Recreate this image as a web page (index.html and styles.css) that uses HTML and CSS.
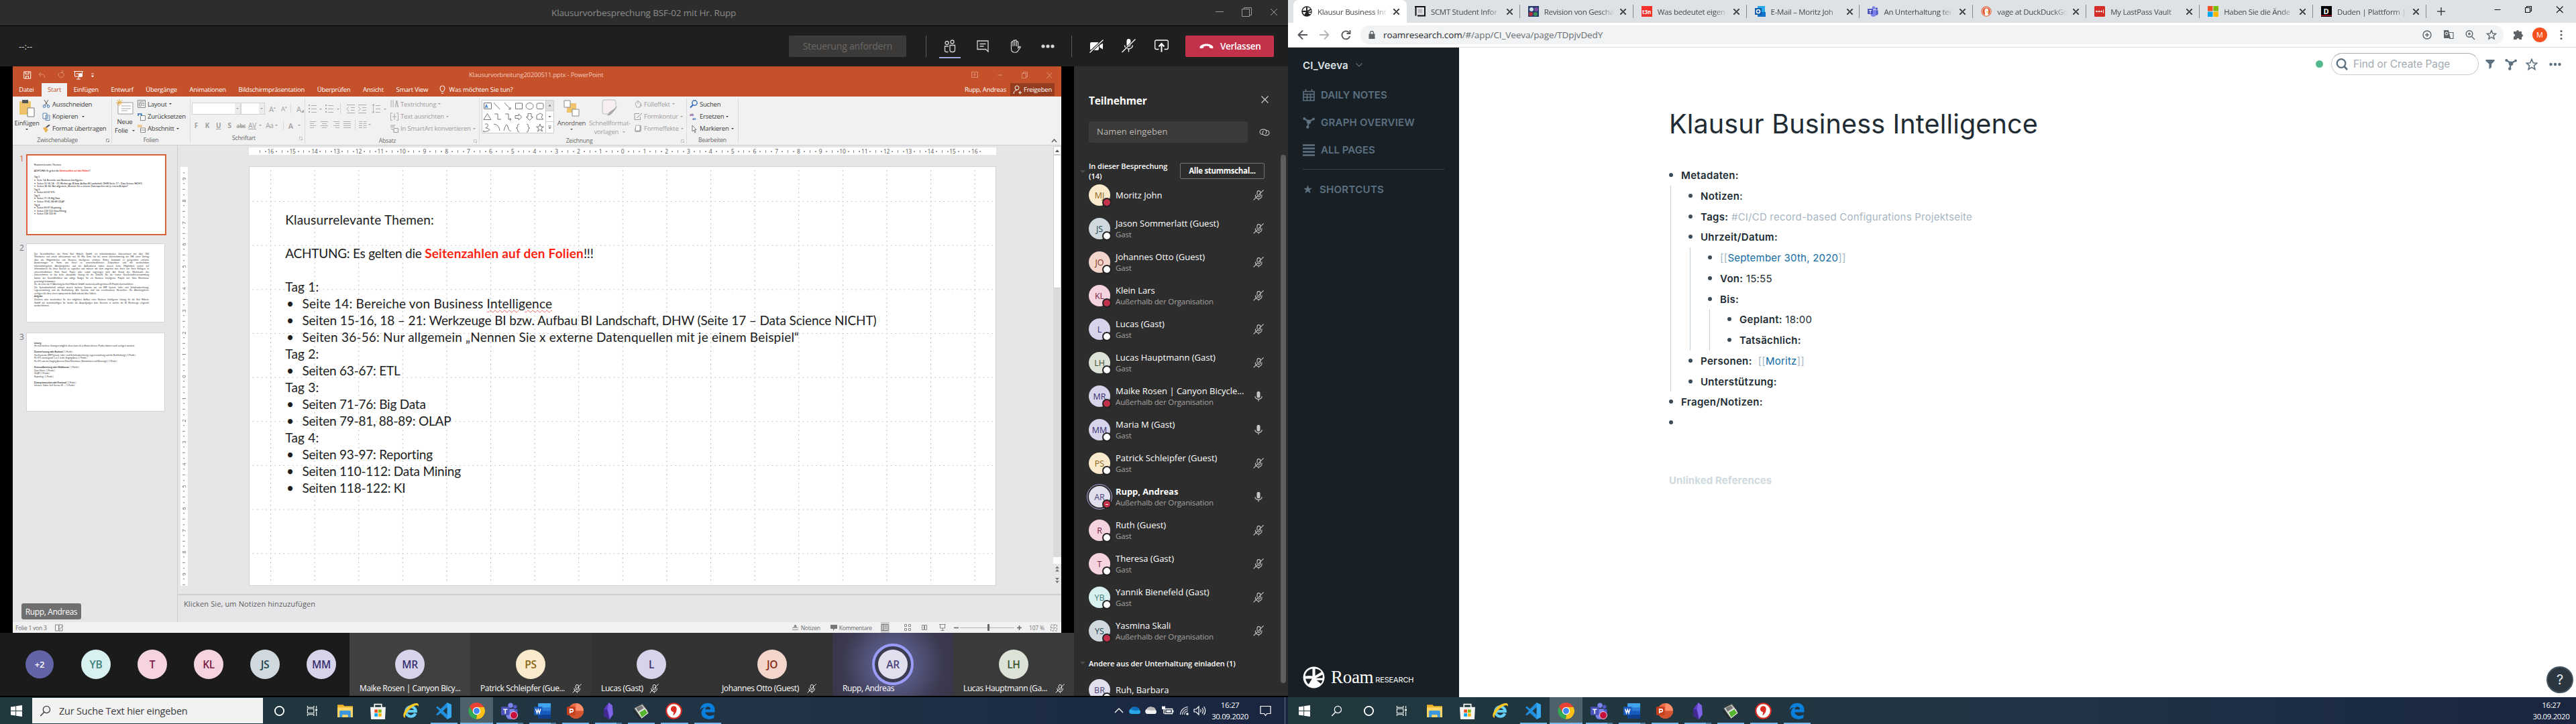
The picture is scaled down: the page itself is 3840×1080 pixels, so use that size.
FILE: index.html
```html
<!DOCTYPE html>
<html lang="de">
<head>
<meta charset="utf-8">
<title>Desktop</title>
<link rel="stylesheet" href="styles.css">
</head>
<body>
<svg class="defs" width="0" height="0" aria-hidden="true">
  <symbol id="mic-off" viewBox="0 0 16 16"><path d="M6 8V4a2.4 2.4 0 0 1 4.8 0v4.5a2.4 2.4 0 0 1-3.6 1.7M3.4 7.5v1.2a4.8 4.8 0 0 0 9.6 0V7.5M8.3 13.4v2.4M.6 15.4 15.6.4" fill="none" stroke="currentColor" stroke-width="1.1"/></symbol>
  <symbol id="mic" viewBox="0 0 16 16"><rect x="5.5" y=".8" width="5" height="9.6" rx="2.5" fill="currentColor"/><path d="M2.9 8.2a5.1 4.4 0 0 0 10.2 0M8 12.7v2.8" fill="none" stroke="currentColor" stroke-width="1.2"/></symbol>
  <symbol id="i-start" viewBox="0 0 18 18"><path d="M0 2.6 7.6 1.5v7H0zM8.6 1.4 18 0v8.5H8.6zM0 9.5h7.6v7L0 15.4zM8.6 9.5H18V18l-9.4-1.4z" fill="#fff"/></symbol>
  <symbol id="i-search" viewBox="0 0 18 18"><circle cx="11" cy="6.8" r="5.4" fill="none" stroke="currentColor" stroke-width="1.3"/><path d="M7.2 10.8 1.4 17" stroke="currentColor" stroke-width="1.5"/></symbol>
  <symbol id="i-cortana" viewBox="0 0 18 18"><circle cx="9" cy="9" r="7" fill="none" stroke="#fff" stroke-width="2"/></symbol>
  <symbol id="i-task" viewBox="0 0 18 18"><path d="M1.5 1v2.5h10V1M1.5 17v-2.5h10V17M1.5 5.5h10v7h-10zM15.5 1v4M15.5 10v7" fill="none" stroke="#fff" stroke-width="1.2"/><path d="M14 6h3v3h-3z" fill="#fff"/></symbol>
  <symbol id="i-explorer" viewBox="0 0 24 24"><path d="M1 3h8l2 2h12v16H1z" fill="#f0b429"/><path d="M1 7h22v14H1z" fill="#ffd667"/><path d="M4 21v-8q0-1.5 1.5-1.5h13Q20 11.5 20 13v8h-4v-3.5H8V21z" fill="#3d97dd"/></symbol>
  <symbol id="i-store" viewBox="0 0 24 24"><path d="M7 7V2.5h10V7" fill="none" stroke="#fff" stroke-width="1.6"/><path d="M1 6.5h22L22 24H2z" fill="#f5f5f5"/><path d="M7 10h4.500v4.500H7z" fill="#f25022"/><path d="M12.500 10H17v4.500h-4.500z" fill="#7fba00"/><path d="M7 15.500h4.500V20H7z" fill="#00a4ef"/><path d="M12.500 15.500H17V20h-4.500z" fill="#ffb900"/></symbol>
  <symbol id="i-ie" viewBox="0 0 24 24"><path d="M18.500 15.500A7 7 0 1 1 19 12.500H6" fill="none" stroke="#63cdf5" stroke-width="4"/><path d="M3.500 21.500C-2 19 6 6 15 2.500c5-2 8-1.500 7.500 2.500-.2-2-3-2.200-7 0C8 9 1.500 19 3.500 21.500z" fill="#f8c927" stroke="#f8c927"/></symbol>
  <symbol id="i-vs" viewBox="0 0 24 24"><path d="M17 0l6 3v18l-6 3-9.500-9L3 18.500 1 17.300 6 12 1 6.700 3 5.500 7.500 9zM17 6.500 11 12l6 5.500z" fill="#1f8fdd" fill-rule="evenodd"/><path d="M17 0l6 3v18l-6 3z" fill="#35a8f0"/></symbol>
  <symbol id="i-chrome" viewBox="0 0 24 24"><path d="M12 12 2 6A11.500 11.500 0 0 1 22 6z" fill="#ea4335"/><path d="M12 12 22.200 6.300A11.500 11.500 0 0 1 12 23.500z" fill="#fbc116"/><path d="M12 12v11.500A11.500 11.500 0 0 1 2 6z" fill="#34a853"/><path d="M12 6.500h10.300A11.500 11.500 0 0 0 2 6l5.200 8.500z" fill="#ea4335"/><path d="M16.800 14.700 11 23.500A11.500 11.500 0 0 0 22.300 6.500H12z" fill="#fbc116"/><circle cx="12" cy="12" r="5.500" fill="#fff"/><circle cx="12" cy="12" r="4.300" fill="#4285f4"/></symbol>
  <symbol id="i-teams" viewBox="0 0 24 24"><circle cx="20" cy="6" r="2.700" fill="#5059c9"/><path d="M16 9.500h7.500v7a4 4 0 0 1-4 4H16z" fill="#5059c9"/><circle cx="13.500" cy="4" r="3.600" fill="#7b83eb"/><path d="M7 9h12v9a6 6 0 0 1-12 0z" fill="#7b83eb"/><rect x="0" y="6" width="12" height="12" rx="1" fill="#4b53bc"/><path d="M3 9h6v1.500H6.800V16H5.200v-5.500H3z" fill="#fff"/></symbol>
  <symbol id="i-word" viewBox="0 0 24 24"><rect x="6" y="1" width="18" height="22" rx="1.500" fill="#2b7cd3"/><path d="M6 1h18v6H6z" fill="#41a5ee"/><path d="M6 17h18v6H6z" fill="#103f91"/><path d="M6 12h18v5H6z" fill="#185abd"/><rect y="6" width="12" height="12" rx="1" fill="#185abd"/><path d="M2.500 9 4.300 15 6 10l1.700 5L9.500 9" fill="none" stroke="#fff" stroke-width="1.500"/></symbol>
  <symbol id="i-ppt" viewBox="0 0 24 24"><circle cx="13" cy="12" r="11" fill="#ed6c47"/><path d="M13 1a11 11 0 0 1 11 11H13z" fill="#ff8f6b"/><path d="M2 12h22a11 11 0 0 1-22 0z" fill="#d35230"/><rect y="6" width="12" height="12" rx="1" fill="#c43e1c"/><path d="M4.500 15.500v-6H7a1.800 1.800 0 0 1 0 3.800H4.500" fill="none" stroke="#fff" stroke-width="1.500"/></symbol>
  <symbol id="i-obs" viewBox="0 0 24 24"><path d="M13 0 18 4l1 13-5 7-8-5 0-10z" fill="#5a3ec8"/><path d="M13 0 11 10l3 14 5-7-1-13z" fill="#7d63e6"/><path d="M6 9l5 1 3 14-8-5z" fill="#41298f"/></symbol>
  <symbol id="i-green" viewBox="0 0 24 24"><path d="M2 8 14 2l8 10-11 9z" fill="#d8dcd8" stroke="#444" stroke-width="1.200"/><path d="M5 8l8-4 3 4-8 5z" fill="#777"/><path d="M9 14l9-5 4 6-9 7z" fill="#55b72f" stroke="#eee"/><path d="M2 12l9 11" stroke="#222" stroke-width="1.800" stroke-dasharray="2 1"/></symbol>
  <symbol id="i-red" viewBox="0 0 24 24"><circle cx="12" cy="12" r="10.800" fill="#fff" stroke="#d92b20" stroke-width="2"/><path d="M12 5a4 4 0 0 1 4 4.500c0 4-2 7-5.500 9.500.9-2.500 1.500-4 1.200-5.500A4.200 4.200 0 1 1 12 5z" fill="#d92b20"/></symbol>
  <symbol id="i-edge" viewBox="0 0 24 24"><path d="M1.500 11C2 4 7 .8 12.500.8 19 .8 22.500 5 22.500 10.500V14H9c.3 3.500 3.500 5 6.500 5 2.500 0 4.500-.7 6-1.700V22c-2 1-4.500 1.700-7.500 1.700C7 23.700 3 19.500 3.500 14c.3-3.500 2.500-6 5-7.300C4.500 7 2.500 9 1.500 11zM9 9.800h7.500C16.500 7.500 15 6 12.800 6 10.700 6 9.300 7.500 9 9.800z" fill="#0a7fdb"/></symbol>
  <symbol id="i-graph" viewBox="0 0 18 18"><path d="M2.500 3 9 7.500 16 3.500M9 7.500 7.500 15" stroke="currentColor" stroke-width="2.200" fill="none"/><circle cx="2.300" cy="3" r="2" fill="currentColor"/><circle cx="16" cy="3.500" r="1.900" fill="currentColor"/><circle cx="9" cy="7.800" r="3.300" fill="currentColor"/><circle cx="7.300" cy="15.600" r="2.200" fill="currentColor"/></symbol>
  <symbol id="i-roam" viewBox="0 0 32 32"><circle cx="16" cy="16" r="15.500" fill="currentColor"/><path d="M14 3.500C8 4.500 4 9 3.500 14q7-1 10.500 0zM18 3.500v10L27 8q-3-4-9-4.500zM4 18q1 5 4.500 8l5-8zM28.500 12 19 17h9.500q.8-2 0-5zM20 20l6 5q2-2 2.500-5z" fill="var(--hole)"/></symbol>
</svg>

<div class="desktop">
<section class="monitor teams">
  <header class="t-title"><span>Klausurvorbesprechung BSF-02 mit Hr. Rupp</span>
    <div class="t-win"><svg width="54" height="16" viewBox="0 0 54 16"><path d="M0 7.500h12M39.500 3.500h11v11h-11zM42.500 3.500v-2h11v11h-2.500" fill="none" stroke="#9a9a9a"/></svg><svg width="12" height="12" viewBox="0 0 12 12"><path d="M1 1l10 10M11 1 1 11" stroke="#9a9a9a"/></svg></div>
  </header>
  <div class="t-bar">
    <span class="timer">--:--</span>
    <span class="request">Steuerung anfordern</span>
    <i class="vbar"></i>
    <div class="t-tools">
      <span class="tool active"><svg width="18" height="20" viewBox="0 0 18 20"><g fill="none" stroke="#d6d6d6" stroke-width="1.300"><circle cx="4.500" cy="5" r="2.500"/><circle cx="12.500" cy="3.500" r="2.500"/><path d="M7 10H1.500v6a2.500 2.500 0 0 0 2.500 2.500h2.500M9 8.500h7.500v7a3 3 0 0 1-3 3h-1.500a3 3 0 0 1-3-3z"/></g></svg></span>
      <span class="tool"><svg width="18" height="18" viewBox="0 0 18 18"><path d="M1 1h16v16l-3.500-3.500H1zM4.500 5.500h9M4.500 9h6" fill="none" stroke="#d6d6d6" stroke-width="1.300"/></svg></span>
      <span class="tool"><svg width="18" height="20" viewBox="0 0 18 20"><path d="M3.500 12V4.500a1.300 1.300 0 0 1 2.600 0V10 2.500a1.300 1.300 0 0 1 2.600 0V9.500 2a1.300 1.300 0 0 1 2.600 0v8 -6a1.200 1.200 0 0 1 2.400 0v8.500l2-2c1-.6 2 .2 1.400 1.200L13 17.500c-2.500 3-9.500 2-9.500-3z" fill="none" stroke="#d6d6d6" stroke-width="1.200"/></svg></span>
      <span class="tool"><svg width="20" height="6" viewBox="0 0 20 6"><g fill="#d6d6d6"><circle cx="3" cy="3" r="2.600"/><circle cx="10" cy="3" r="2.600"/><circle cx="17" cy="3" r="2.600"/></g></svg></span>
    </div>
    <i class="vbar"></i>
    <div class="t-tools media">
      <span class="tool"><svg width="21" height="20" viewBox="0 0 21 20"><path d="M1 6q0-2 2-2h9q2 0 2 2v8q0 2-2 2H3q-2 0-2-2zM15 8.500l5-3v9l-5-3z" fill="#fff"/><path d="M.5 19.500 20.500.5" stroke="#1f1f1f" stroke-width="3.500"/><path d="M.5 19.500 20.500.5" stroke="#fff" stroke-width="1.300"/></svg></span>
      <span class="tool"><svg width="21" height="21" viewBox="0 0 21 21"><rect x="7.500" y="0" width="6" height="12" rx="3" fill="#fff"/><path d="M4.500 9.500a6 5.500 0 0 0 12 0M10.500 15.500v4" fill="none" stroke="#fff" stroke-width="1.300"/><path d="M.5 20 20.500.5" stroke="#1f1f1f" stroke-width="3"/><path d="M.5 20 20.500.5" stroke="#fff" stroke-width="1.300"/></svg></span>
      <span class="tool"><svg width="21" height="19" viewBox="0 0 21 19"><path d="M6.500 14.500H3Q.7 14.500.7 12.500V3Q.7 1 3 1h15q2.300 0 2.300 2v9.500q0 2-2.300 2h-3.500" fill="none" stroke="#fff" stroke-width="1.300"/><path d="M10.500 18.500V7M6.500 10.500l4-4.500 4 4.500" fill="none" stroke="#fff" stroke-width="2"/></svg></span>
    </div>
    <span class="leave"><svg width="21" height="8" viewBox="0 0 21 8"><path d="M.5 6C0 3 5 .5 10.500.5S21 3 20.500 6q-.3 1.500-2 1.200L15.500 6.500q-1-.3-1-1.500V4q-4-1.200-8 0v1q0 1.200-1 1.500l-3 .7Q.8 7.500.5 6z" fill="#fff"/></svg>Verlassen</span>
  </div>
  <div class="t-body">
    <div class="stage">
      <div class="ppt">
        <div class="p-title">
          <svg width="110" height="16" viewBox="0 0 110 16"><g fill="none" stroke="#fff"><path d="M.7 3h10v10h-10zM3 3v3.500h5V3M3.500 13V9.500h4V13"/><path d="M26 4l-3 3 3 3M23.500 7h5q3 0 3 5M58 4a4 4 0 1 1-5 1M58 1v3.500h-3.500" stroke="#e09479"/><path d="M75 2.500h14M76.500 3v7h11V3M82 10v4M79 14h6M79 6h4"/></g><circle cx="85" cy="8" r="3" fill="#fff"/><path d="M101 6h4M101.500 9h3L103 11z" fill="#fff" stroke="#fff" stroke-width=".8"/></svg>
          <span class="p-name">Klausurvorbreitung20200511.pptx - PowerPoint</span>
          <svg class="p-win" width="120" height="12" viewBox="0 0 120 12"><path d="M.5 1.500h9v8h-9zM5 8V4M3 5.500 5 3.500l2 2M39 6h7M75.500 3.500h6v7h-6zM77.500 3.500v-2h6v7h-2M112.500 2l8 9M120.500 2l-8 9" fill="none" stroke="#dd9378"/></svg>
        </div>
        <nav class="p-tabs"><span>Datei</span><span class="on">Start</span><span>Einfügen</span><span>Entwurf</span><span>Übergänge</span><span>Animationen</span><span>Bildschirmpräsentation</span><span>Überprüfen</span><span>Ansicht</span><span>Smart View</span>
          <svg width="9" height="13" viewBox="0 0 9 13"><path d="M3 9.500Q1 7 1 4.500a3.500 3.500 0 0 1 7 0Q8 7 6 9.500zM3 12h3" fill="none" stroke="#fff"/></svg><span class="ask">Was möchten Sie tun?</span>
          <span class="user">Rupp, Andreas</span><span class="share"><svg width="13" height="14" viewBox="0 0 13 14"><circle cx="6" cy="4" r="3" fill="none" stroke="#fff"/><path d="M1 13q0-5 5-5.500M8 11h5M10.500 8.500v5" fill="none" stroke="#fff"/></svg>Freigeben</span></nav>
        <div class="ribbon">
          <div class="grp g1"><div class="gb">
            <div class="big"><svg width="24" height="27" viewBox="0 0 24 27"><path d="M1 3h17v20H1z" fill="#efc36c"/><path d="M5 1h9v5H5z" fill="#555"/><path d="M13 13h10v13H13z" fill="#fff" stroke="#777"/></svg><span>Einfügen</span><i class="dd"></i></div>
            <div class="rows"><span><svg viewBox="0 0 12 12"><path d="M3 0l5 8M9 0 4 8" stroke="#555"/><circle cx="3" cy="9.500" r="1.800" fill="none" stroke="#2b6cb8"/><circle cx="9" cy="9.500" r="1.800" fill="none" stroke="#2b6cb8"/></svg>Ausschneiden</span><span><svg viewBox="0 0 12 12"><path d="M1 1h6v8H1zM5 4h6v7.500H5z" fill="#fff" stroke="#5f83a8"/><path d="M6.500 6.500h3M6.500 9h3" stroke="#5f83a8"/></svg>Kopieren<i class="dd"></i></span><span><svg viewBox="0 0 12 12"><path d="M1 5l4-2 4 5-4 4z" fill="#e8b45a"/><path d="M6 4l5-4" stroke="#555" stroke-width="2"/></svg>Format übertragen</span></div>
          </div><div class="gl">Zwischenablage<i class="la"></i></div></div>
          <div class="grp g2"><div class="gb">
            <div class="big"><svg width="26" height="24" viewBox="0 0 26 24"><path d="M3 5h22v17H3z" fill="#fff" stroke="#999"/><path d="M8 10h14M8 14h14M8 17h9" stroke="#aaa"/><path d="M5 0v10M0 5h10M1.500 1.500l7 7M8.500 1.500l-7 7" stroke="#e9a33b"/></svg><span>Neue<br>Folie <i class="dd"></i></span></div>
            <div class="rows"><span><svg viewBox="0 0 12 12"><path d="M.5.5h11v11H.5zM2.500 3h7M2.500 5v4h3V5zM7 5.500h3M7 8h3" fill="none" stroke="#888"/></svg>Layout<i class="dd"></i></span><span><svg viewBox="0 0 12 12"><path d="M4.500 4.500h7v7h-7z" fill="#fff" stroke="#888"/><path d="M1 5V1M1 2h5v3" fill="none" stroke="#2b6cb8" stroke-width="1.500"/></svg>Zurücksetzen</span><span><svg viewBox="0 0 12 12"><path d="M0 1h7M0 3h7" stroke="#e9a33b"/><path d="M4.500 5h7v6.500h-7zM4.500 8h7" fill="#fff" stroke="#888"/></svg>Abschnitt<i class="dd"></i></span></div>
          </div><div class="gl">Folien</div></div>
          <div class="grp g3 off"><div class="gb col">
            <div class="r1"><span class="combo wide"><i class="dd"></i></span><span class="combo"><i class="dd"></i></span><span class="ca">A<sup>▴</sup></span><span class="ca sm">A<sup>▾</sup></span><i class="sp"></i><span class="ca">A<b>◢</b></span></div>
            <div class="r2"><b>F</b><b><em>K</em></b><b><u>U</u></b><b>S</b><s>abc</s><span class="kern">AV</span><i class="dd"></i><span>Aa</span><i class="dd"></i><i class="sp"></i><span class="fa">A</span><i class="dd"></i></div>
          </div><div class="gl">Schriftart<i class="la"></i></div></div>
          <div class="grp g4 off"><div class="gb">
            <svg class="para" width="125" height="56" viewBox="0 0 125 56"><g fill="none" stroke="#b0afaf"><path d="M9 11.500h8M9 16.500h8M9 21.500h8M34 11.500h8M34 16.500h8M34 21.500h8M62 10.500h12M68 14.500h6M68 18.500h6M62 22.500h12M79 10.500h12M85 14.500h6M85 18.500h6M79 22.500h12M105 11.500h7M105 16.500h7M105 21.500h7M101.500 9v14M99.500 11.500l2-2 2 2M99.500 20.500l2 2 2-2M65 13l-3 3.500 3 3.500M79 13l3 3.500-3 3.500"/><path d="M7 35.500h9M7 38.500h6M7 41.500h9M7 44.500h6M23 35.500h11M25 38.500h7M23 41.500h11M25 44.500h7M42 35.500h9M45 38.500h6M42 41.500h9M45 44.500h6M57 35.500h11M57 38.500h11M57 41.500h11M57 44.500h11M80 35.500h5M80 38.500h5M80 41.500h5M80 44.500h5M86.500 35.500h5M86.500 38.500h5M86.500 41.500h5M86.500 44.500h5"/><path d="M52.500 8v16M74.500 32v16" stroke="#d6d5d5"/></g><path d="M5 10h2v2H5zM5 15h2v2H5zM5 20h2v2H5zM30 10h2v2h-2zM30 15h2v2h-2zM30 20h2v2h-2zM21 16h4l-2 2zM47 16h4l-2 2zM117 16h4l-2 2zM94 39h4l-2 2z" fill="#a9a8a8"/></svg>
            <div class="rows"><span><svg viewBox="0 0 12 12"><path d="M1 0v11M4 0v11M10 1v10M7 11l2-10 3 10" fill="none" stroke="#aaa"/></svg>Textrichtung<i class="dd"></i></span><span><svg viewBox="0 0 12 12"><path d="M3 .5H.5v11H3M9 .5h2.500v11H9M3 6h6M6 1v10" fill="none" stroke="#aaa"/></svg>Text ausrichten<i class="dd"></i></span><span><svg viewBox="0 0 12 12"><path d="M0 1h7M0 3.500h6M5 5.500h6.500v6H5zM1 6l4 2" fill="none" stroke="#999"/></svg>In SmartArt konvertieren<i class="dd"></i></span></div>
          </div><div class="gl">Absatz<i class="la"></i></div></div>
          <div class="grp g5 off"><div class="gb">
            <svg class="shapes" width="108" height="50" viewBox="0 0 108 50"><path d="M.5.5h107v49H.5z" fill="#fff" stroke="#ccc"/><path d="M95.500.500h12v16h-12z" fill="#e2e2e2" stroke="#ccc"/><path d="M95.500 16.500v33M95.500 16.500h12M95.500 32.500h12" stroke="#ccc"/><g fill="none" stroke="#777"><path d="M3.500 4.500h11v9h-11z"/><path d="M18 4l9 10M34 4l9 10M43 11v3h-3"/><path d="M50.500 5h10v8.500h-10z"/><ellipse cx="71.500" cy="9.300" rx="5.500" ry="4.800"/><rect x="82" y="5" width="10" height="8.500" rx="2"/><path d="M3 29.500 8.500 20.500 14 29.500zM19 21h5v8h5M35 21h5v8h4M42 27l2 2-2 2M50 23.500h5V21l5 4.500-5 4.500v-2.500h-5zM69 20.500h5v5h2.500l-5 5-5-5H69zM82 29V23l5-3 4 2-2 4 3 3z"/><path d="M5 36q6-1 4 3t-3 3 4 1-3 4-3-2M18 36q8 1 9 10M33 46q4-14 6-6t5 6M56 36q-2.500 0-2.500 3t-2 3q2 0 2 3t2.500 3M67 36q2.500 0 2.500 3t2 3q-2 0-2 3t-2.500 3M87 36l1.500 4h4L89 42.500l1.500 4.500-3.500-2.700-3.500 2.700 1.500-4.500-3.500-2.500h4z"/></g><text x="4.500" y="12" class="tA">A</text><path d="M99.500 9.500h4l-2-2.500zM99.500 24h4l-2 2.500zM99.500 41h4l-2 2.500zM99.500 38.500h4v1h-4z" fill="#666"/></svg>
            <div class="big anord"><svg width="24" height="25" viewBox="0 0 24 25"><path d="M5 5h14v14H5z" fill="#f0c46c"/><path d="M1 1h9v10H1zM13 14h10v10H13z" fill="#fff" stroke="#888"/></svg><span>Anordnen</span><i class="dd"></i></div>
            <div class="big schnell"><svg width="26" height="25" viewBox="0 0 26 25"><path d="M2 4q0-3 3-3h14q3 0 3 3v10l-7 8H5q-3 0-3-3z" fill="#f6eef3" stroke="#bbb"/><path d="M25 10l-7 9-5 5-4 .5 3-5z" fill="#aaa"/></svg><span>Schnellformat-<br>vorlagen <i class="dd"></i></span></div>
            <div class="rows"><span><svg viewBox="0 0 12 12"><path d="M2 5l4-4 4 4-1 6H4zM6 1v5M11 6v4" fill="none" stroke="#aaa"/></svg>Fülleffekt<i class="dd"></i></span><span><svg viewBox="0 0 12 12"><path d="M8 1.500H1v9h8.500V6M4 8l8-7" fill="none" stroke="#999"/></svg>Formkontur<i class="dd"></i></span><span><svg viewBox="0 0 12 12"><path d="M3 1h7q1 0 1 1v7l-2 2H2L1 9V7z" fill="#aaa"/><path d="M3 1h6v6q0 2-2 2H2z" fill="#fff" stroke="#aaa"/></svg>Formeffekte<i class="dd"></i></span></div>
          </div><div class="gl">Zeichnung<i class="la"></i></div></div>
          <div class="grp g6"><div class="gb"><div class="rows"><span><svg viewBox="0 0 12 12"><circle cx="7.500" cy="4.500" r="3.700" fill="none" stroke="#2b6cb8" stroke-width="1.400"/><path d="M5 7.500 1 11.500" stroke="#2b6cb8" stroke-width="2"/></svg>Suchen</span><span><svg viewBox="0 0 12 12"><text x="0" y="5" class="ab">ab</text><text x="4" y="11" class="ac">ac</text></svg>Ersetzen<i class="dd"></i></span><span><svg viewBox="0 0 12 12"><path d="M4 1v9l2-2 2 4 1-1-1.500-3.500H10z" fill="#fff" stroke="#777"/></svg>Markieren<i class="dd"></i></span></div></div><div class="gl">Bearbeiten</div></div>
          <svg class="collapse" width="9" height="6" viewBox="0 0 9 6"><path d="M1 5l3.500-4L8 5" fill="none" stroke="#555" stroke-width="1.300"/></svg>
        </div>
        <div class="p-work">
          <div class="thumbs">
            <div class="th sel"><b>1</b><div class="mini"><div class="copy"><p>Klausurrelevante Themen:</p><p>&nbsp;</p><p class="warn">ACHTUNG: Es gelten die <strong>Seitenzahlen auf den Folien</strong>!!!</p><p>&nbsp;</p><p>Tag 1:</p><p class="li">Seite 14: Bereiche von Business Intelligence</p><p class="li l15">Seiten 15-16, 18 – 21: Werkzeuge BI bzw. Aufbau BI Landschaft, DHW (Seite 17 – Data Science NICHT)</p><p class="li">Seiten 36-56: Nur allgemein „Nennen Sie x externe Datenquellen mit je einem Beispiel“</p><p>Tag 2:</p><p class="li n">Seiten 63-67: ETL</p><p>Tag 3:</p><p class="li n">Seiten 71-76: Big Data</p><p class="li n">Seiten 79-81, 88-89: OLAP</p><p>Tag 4:</p><p class="li n">Seiten 93-97: Reporting</p><p class="li n">Seiten 110-112: Data Mining</p><p class="li n">Seiten 118-122: KI</p></div></div></div>
            <div class="th t2"><b>2</b><div class="mini just"><p>Der Geschäftsführer der Firma Karl Häberle GmbH, ein mittelständisches Unternehmen mit über 300</p><p>Mitarbeiter und einem Jahresumsatz von 50 Mio. Euro, hat bei einem Unternehmertag der IHK einen Vortrag</p><p>über die Möglichkeiten von Business Intelligence erfahren. Bisher bekommt er gelegentlich einfache</p><p>Auswertungen in Form von Excel zu unterschiedlichsten Zeitpunkten und mit wechselndem</p><p>Informationsgehalt. Abteilungsleiter und der Außendienst haben derzeit keine Möglichkeit zentral auf</p><p>Informationen für ihren Bereich zu zugreifen und müssen mit dem umgehen was ihnen von ihren Kollegen, in</p><p>unterschiedlichster Form Excel, Papier oder verbal zugetragen wird. Auf Grund des Wachstums des</p><p>Unternehmens ist das keine akzeptable Lösung für die Zukunft. Bei der letzten Gesellschafterversammlung</p><p>konnte der Geschäftsführer das nötige Budget für ein Business Intelligence Projekt incl. Data Warehouse</p><p class="end">genehmigt bekommen.</p><p class="end">Sie, als Leiter der IT Abteilung der Karl Häberle GmbH, werden beauftragt dieses BI Projekt durchzuführen.</p><p>Die Systemlandschaft umfasst derzeit mehrere Systeme wie ein ERP System, Lohn- und Gehaltsabrechnung,</p><p>Lagerverwaltung und die Buchhaltung. Alle Systeme sind von verschiedenen Herstellern. Die Abteilungsleiter</p><p class="end">verfügen alle über einen Laptop und der Außendienst über Tablets.</p><p class="end"><b>Aufgabe:</b></p><p>Zeichnen oder beschreiben Sie den möglichen Aufbau einer Business Intelligence Lösung für die Karl Häberle</p><p>GmbH auf, berücksichtigen Sie hierbei die Ausprägungen bzw. Bereiche in welche die BI Werkzeuge eingeteilt</p><p class="end">werden können.</p></div></div>
            <div class="th t3"><b>3</b><div class="mini just"><p class="end"><b>Lösung:</b></p><p class="end">(Es sind mehrere Lösungen möglich, diese kann als Leitfaden dienen, Punkte können auch verlagert werden)</p><p>&nbsp;</p><p class="end"><b>Datenerfassung oder Backend</b> ( 1 Punkt )</p><p class="end">Quellsysteme (ERP System, Lohn- und Gehaltsabrechnung, Lagerverwaltung und die Buchhaltung) ( 1 Punkt )</p><p class="end">Per ETL vorwiegend 1 zu 1 in die Staging Area ( 1 Punkt )</p><p class="end">Per ETL von der Staging Area ins Data Warehouse (Normalisiert und Bereinigt) ( 1 Punkt )</p><p>&nbsp;</p><p class="end"><b>Datenaufbereitung oder Middleware</b> ( 1 Punkt )</p><p class="end">Data Marts ( 1 Punkt )</p><p class="end">OLAP ( 1 Punkt )</p><p class="end">Reporting ( 1 Punkt )</p><p>&nbsp;</p><p class="end"><b>Datenpräsentation oder Frontend</b> ( 1 Punkt )</p><p class="end">Intranet, Tablet, Self-Service BI ... ( 1 Punkt )</p></div></div>
            <span class="badge">Rupp, Andreas</span>
          </div>
          <div class="p-right">
            <div class="canvas">
              <div class="vruler"><span>9</span><span>8</span><span>7</span><span>6</span><span>5</span><span>4</span><span>3</span><span>2</span><span>1</span><span>0</span><span>1</span><span>2</span><span>3</span><span>4</span><span>5</span><span>6</span><span>7</span><span>8</span><span>9</span></div>
              <div class="mid">
                <div class="hruler"><span>16</span><span>15</span><span>14</span><span>13</span><span>12</span><span>11</span><span>10</span><span>9</span><span>8</span><span>7</span><span>6</span><span>5</span><span>4</span><span>3</span><span>2</span><span>1</span><span>0</span><span>1</span><span>2</span><span>3</span><span>4</span><span>5</span><span>6</span><span>7</span><span>8</span><span>9</span><span>10</span><span>11</span><span>12</span><span>13</span><span>14</span><span>15</span><span>16</span></div>
                <div class="slide">
                  <svg class="grid" width="1112" height="624"><defs><pattern id="gp" x="31" y="51" width="65.600" height="65.650" patternUnits="userSpaceOnUse"><path d="M.5 0v65.650" stroke="#a5a5a5" stroke-dasharray="1.500 5.065"/><path d="M0 .5h65.600" stroke="#a5a5a5" stroke-dasharray="1.300 5.260"/></pattern></defs><rect x="4" y="4" width="1104" height="616" fill="url(#gp)"/></svg>
                  <div class="copy"><p>Klausurrelevante Themen:</p><p>&nbsp;</p><p class="warn">ACHTUNG: Es gelten die <strong>Seitenzahlen auf den Folien</strong>!!!</p><p>&nbsp;</p><p>Tag 1:</p><p class="li">Seite 14: Bereiche von Business <u>Intelligence</u></p><p class="li l15">Seiten 15-16, 18 – 21: Werkzeuge BI bzw. Aufbau BI Landschaft, DHW (Seite 17 – Data Science NICHT)</p><p class="li">Seiten 36-56: Nur allgemein „Nennen Sie x externe Datenquellen mit je einem Beispiel“</p><p>Tag 2:</p><p class="li n">Seiten 63-67: ETL</p><p>Tag 3:</p><p class="li n">Seiten 71-76: Big Data</p><p class="li n">Seiten 79-81, 88-89: OLAP</p><p>Tag 4:</p><p class="li n">Seiten 93-97: Reporting</p><p class="li n">Seiten 110-112: Data Mining</p><p class="li n">Seiten 118-122: KI</p></div>
                </div>
              </div>
              <div class="vscroll"><i class="up"></i><i class="knob"></i><i class="track"></i><svg width="12" height="34" viewBox="0 0 12 34"><path d="M3 7h6L6 3.500zM3 11.500h6L6 8zM3 21h6l-3 3.500zM3 25.500h6L6 29z" fill="#777"/></svg></div>
            </div>
            <div class="notes">Klicken Sie, um Notizen hinzuzufügen</div>
          </div>
        </div>
        <div class="p-status"><span>Folie 1 von 3</span><svg width="13" height="11" viewBox="0 0 13 11"><path d="M.5 1h5v9h-5zM6 1h5v9H6zM7 8l5-6" fill="none" stroke="#888"/></svg>
          <span class="st-n"><svg width="9" height="9" viewBox="0 0 9 9"><path d="M0 4.500h9M0 7.500h9M2.500 3h4l-2-3z" fill="#777" stroke="#777" stroke-width=".8"/></svg>Notizen</span><span class="st-k"><svg width="10" height="9" viewBox="0 0 10 9"><path d="M0 0h10v6H6L4 9V6H0z" fill="#777"/></svg>Kommentare</span>
          <i class="st-view"><svg width="12" height="10" viewBox="0 0 12 10"><path d="M1 .5h10v9H1zM4 .5v9M6 3h3M6 6h3" fill="none" stroke="#777"/></svg></i>
          <svg class="st-z" width="240" height="16" viewBox="0 0 240 16"><g fill="none" stroke="#888"><path d="M10.500 3.500h3v3h-3zM16.500 3.500h3v3h-3zM10.500 9.500h3v3h-3zM16.500 9.500h3v3h-3zM36.500 4.500h3v7h-3zM40.500 4.500h3v7h-3zM62 3.500h10M63.500 4v5h7V4M67 9v3M64.500 12.500h5"/><path d="M93 8.500h81" stroke="#b5b5b5"/><path d="M84 8.500h7M178 8.500h7M181.500 5v7" stroke="#666" stroke-width="1.500"/><path d="M228.500 4h9v9h-9zM233 4v9M228.500 8.500h9" stroke-dasharray="3 1.500"/></g><path d="M134 3h3v10h-3z" fill="#666"/><text x="196" y="11.500">107 %</text></svg>
        </div>
      </div>
      <div class="strip">
        <div class="minis"><i class="av more">+2</i><i class="av yb">YB</i><i class="av pk">T</i><i class="av pk">KL</i><i class="av js">JS</i><i class="av pu">MM</i></div>
        <div class="tile a"><i class="av pu">MR</i><span>Maike Rosen | Canyon Bicy...</span></div>
        <div class="tile b"><i class="av ye">PS</i><span>Patrick Schleipfer (Gue...</span><svg><use href="#mic-off"/></svg></div>
        <div class="tile c near"><i class="av pu">L</i><span>Lucas (Gast)</span><svg><use href="#mic-off"/></svg></div>
        <div class="tile d near2"><i class="av jo">JO</i><span>Johannes Otto (Guest)</span><svg><use href="#mic-off"/></svg></div>
        <div class="tile talk"><i class="av ar">AR</i><span>Rupp, Andreas</span></div>
        <div class="tile f"><i class="av lh">LH</i><span>Lucas Hauptmann (Ga...</span><svg><use href="#mic-off"/></svg></div>
      </div>
    </div>
    <aside class="panel">
      <div class="ph"><b>Teilnehmer</b><svg width="11" height="11" viewBox="0 0 11 11"><path d="M.5.5l10 10M10.500.5l-10 10" stroke="#d0d0d0" stroke-width="1.100"/></svg></div>
      <div class="pi"><span>Namen eingeben</span><svg width="16" height="11" viewBox="0 0 16 11"><path d="M6 8.500H5a3.700 3.700 0 0 1-.5-7.400H8a3.700 3.700 0 0 1 1.500 6.600M10 2.500h1a3.700 3.700 0 0 1 .5 7.400H8A3.700 3.700 0 0 1 6.500 3.300" fill="none" stroke="#c8c6c4" stroke-width="1.100"/></svg></div>
      <div class="sec"><i></i><b>In dieser Besprechung<br>(14)</b><span>Alle stummschal...</span></div>
      <ul class="people">
        <li><i class="av ye">MJ<em class="busy"></em></i><div><b>Moritz John</b></div><svg><use href="#mic-off"/></svg></li>
        <li><i class="av js">JS<em></em></i><div><b>Jason Sommerlatt (Guest)</b><small>Gast</small></div><svg><use href="#mic-off"/></svg></li>
        <li><i class="av jo">JO<em></em></i><div><b>Johannes Otto (Guest)</b><small>Gast</small></div><svg><use href="#mic-off"/></svg></li>
        <li><i class="av pk">KL<em class="busy"></em></i><div><b>Klein Lars</b><small>Außerhalb der Organisation</small></div><svg><use href="#mic-off"/></svg></li>
        <li><i class="av pu">L<em></em></i><div><b>Lucas (Gast)</b><small>Gast</small></div><svg><use href="#mic-off"/></svg></li>
        <li><i class="av lh">LH<em></em></i><div><b>Lucas Hauptmann (Gast)</b><small>Gast</small></div><svg><use href="#mic-off"/></svg></li>
        <li><i class="av pu">MR<em class="busy"></em></i><div><b>Maike Rosen | Canyon Bicycle...</b><small>Außerhalb der Organisation</small></div><svg><use href="#mic"/></svg></li>
        <li><i class="av pu">MM<em></em></i><div><b>Maria M (Gast)</b><small>Gast</small></div><svg><use href="#mic"/></svg></li>
        <li><i class="av ye">PS<em></em></i><div><b>Patrick Schleipfer (Guest)</b><small>Gast</small></div><svg><use href="#mic-off"/></svg></li>
        <li class="speaking"><i class="av ar">AR<em class="busy dnd"></em></i><div><b>Rupp, Andreas</b><small>Außerhalb der Organisation</small></div><svg><use href="#mic"/></svg></li>
        <li><i class="av pk">R<em></em></i><div><b>Ruth (Guest)</b><small>Gast</small></div><svg><use href="#mic-off"/></svg></li>
        <li><i class="av pk">T<em></em></i><div><b>Theresa (Gast)</b><small>Gast</small></div><svg><use href="#mic-off"/></svg></li>
        <li><i class="av yb">YB<em></em></i><div><b>Yannik Bienefeld (Gast)</b><small>Gast</small></div><svg><use href="#mic-off"/></svg></li>
        <li><i class="av js">YS<em class="busy"></em></i><div><b>Yasmina Skali</b><small>Außerhalb der Organisation</small></div><svg><use href="#mic-off"/></svg></li>
      </ul>
      <div class="sec two"><i></i><b>Andere aus der Unterhaltung einladen (1)</b></div>
      <ul class="people"><li><i class="av ar">BR<em></em></i><div><b>Ruh, Barbara</b></div></li></ul>
      <i class="pscroll"></i>
    </aside>
  </div>
  <footer class="taskbar">
    <span class="tk start"><svg width="17" height="17"><use href="#i-start"/></svg></span>
    <span class="searchbox"><svg width="17" height="17"><use href="#i-search"/></svg>Zur Suche Text hier eingeben</span>
    <span class="tk"><svg width="17" height="17"><use href="#i-cortana"/></svg></span><span class="tk tv"><svg width="17" height="17"><use href="#i-task"/></svg></span>
    <span class="tk app"><svg><use href="#i-explorer"/></svg></span><span class="tk app"><svg><use href="#i-store"/></svg></span><span class="tk app"><svg><use href="#i-ie"/></svg></span><span class="tk app run"><svg><use href="#i-vs"/></svg></span><span class="tk app cur"><svg><use href="#i-chrome"/></svg></span><span class="tk app run multi dot"><svg><use href="#i-teams"/></svg></span><span class="tk app run multi"><svg><use href="#i-word"/></svg></span><span class="tk app run"><svg><use href="#i-ppt"/></svg></span><span class="tk app run multi"><svg><use href="#i-obs"/></svg></span><span class="tk app run"><svg><use href="#i-green"/></svg></span><span class="tk app run"><svg><use href="#i-red"/></svg></span><span class="tk app run"><svg><use href="#i-edge"/></svg></span>
    <svg class="tray" width="142" height="20" viewBox="0 0 142 20"><path d="M3 13l6-6 6 6" fill="none" stroke="#fff" stroke-width="1.300"/><path d="M27 15a4 4 0 0 1-.5-7.500Q29 3 34 5q5 0 5.500 4A3.500 3.500 0 0 1 39 15z" fill="#28a8ea"/><path d="M27 9q2-6 7.500-4.500Q39 5 39.500 9l-5 1z" fill="#0f6cbd"/><path d="M51 15a4 4 0 0 1-.5-7.500Q53 3 58 5q5 0 5.500 4A3.500 3.500 0 0 1 63 15z" fill="#f2f2f2"/><path d="M51 9q2-6 7.500-4.500Q63 5 63.500 9l-5 1z" fill="#b9b9b9"/><path d="M77.500 7.500h11v7h-11z" fill="none" stroke="#fff" stroke-width="1.300"/><path d="M79.500 9.500h7v3h-7zM89 9.500h1.500v3H89zM73 4h5v4h-5z" fill="#fff"/><path d="M74 3v2M77 3v2M75.500 8v6h2" stroke="#fff"/><g fill="none" stroke="#ddd" stroke-width="1.200"><path d="M100.500 16A12 12 0 0 1 112 4.500M103.500 16a9 9 0 0 1 8.500-8.500M106.500 16a6 6 0 0 1 5.500-5.500"/><path d="M121 8h3l4-4v12l-4-4h-3zM130.500 8q1.500 2 0 4.500M133 6q3 4 0 8.500M135.500 4q4.500 6 0 12.500" stroke="#fff"/></g><circle cx="111" cy="15" r="1.800" fill="#fff"/></svg>
    <span class="clock">16:27<br>30.09.2020</span>
    <svg class="note" width="17" height="17" viewBox="0 0 17 17"><path d="M1 1.500h15v11h-5.500L8.500 15.500 6.500 12.500H1z" fill="none" stroke="#fff" stroke-width="1.200"/></svg>
    <i class="peek"></i>
  </footer>
</section>

<section class="monitor chrome">
  <header class="tabs">
    <span class="tab act"><svg class="roamfav"><use href="#i-roam"/></svg><b>Klausur Business Int</b><i></i></span>
    <span class="tab"><svg viewBox="0 0 16 16"><path d="M1.500 0v14.500M0 1h15v13.500H4" fill="none" stroke="#111" stroke-width="2"/><path d="M5 4.500h6v6H5z" fill="#bbb"/></svg><b>SCMT Student Infor</b><i></i></span>
    <span class="tab"><svg viewBox="0 0 16 16"><path d="M0 0h16v16H0z" fill="#243a6b"/><circle cx="5" cy="5" r="3" fill="#cfe0ea"/><circle cx="12" cy="5" r="3" fill="#7d50a8"/><circle cx="4" cy="12" r="3" fill="#b5333f"/><circle cx="11" cy="12" r="3" fill="#3b8f58"/></svg><b>Revision von Geschä</b><i></i></span>
    <span class="tab"><svg viewBox="0 0 16 16"><path d="M0 0h16v16H0z" fill="#f4312a"/><text x="1" y="11.500" class="t3n">t3n</text></svg><b>Was bedeutet eigen</b><i></i></span>
    <span class="tab"><svg viewBox="0 0 16 16"><path d="M4 0h11v15H4z" fill="#28a8ea"/><path d="M4 9h12v7H4z" fill="#1373c8"/><path d="M0 3h10v10H0z" fill="#0f5aa8"/><circle cx="5" cy="8" r="2.600" fill="none" stroke="#fff" stroke-width="1.500"/></svg><b>E-Mail – Moritz Joh</b><i></i></span>
    <span class="tab"><svg><use href="#i-teams"/></svg><b>An Unterhaltung tei</b><i></i></span>
    <span class="tab"><svg viewBox="0 0 16 16"><circle cx="8" cy="8" r="7.200" fill="#de5833" stroke="#de5833"/><circle cx="8" cy="8" r="6.300" fill="none" stroke="#fff" stroke-width=".8"/><path d="M6 14 5.500 6q0-3 3-2.500t2.500 4L10.500 14z" fill="#fff"/><path d="M8 8h4l-1 1.500H8z" fill="#fc3"/></svg><b>vage at DuckDuckGo</b><i></i></span>
    <span class="tab"><svg viewBox="0 0 16 16"><rect width="16" height="16" rx="1.500" fill="#d32d27"/><g fill="#fff"><circle cx="3.500" cy="8" r="1.300"/><circle cx="7" cy="8" r="1.300"/><circle cx="10.500" cy="8" r="1.300"/><path d="M13 5.500h1v5h-1z"/></g></svg><b>My LastPass Vault</b><i></i></span>
    <span class="tab"><svg viewBox="0 0 16 16"><path d="M0 0h7.500v7.500H0z" fill="#f25022"/><path d="M8.500 0H16v7.500H8.500z" fill="#7fba00"/><path d="M0 8.500h7.500V16H0z" fill="#00a4ef"/><path d="M8.500 8.500H16V16H8.500z" fill="#ffb900"/></svg><b>Haben Sie die Ände</b><i></i></span>
    <span class="tab"><svg viewBox="0 0 16 16"><path d="M0 0h16v16H0z" fill="#000"/><path d="M0 13.500h16V15H0z" fill="#b3122b"/><text x="3.500" y="11.500" class="dud">D</text></svg><b>Duden | Plattform |</b><i></i></span>
    <svg class="plus" width="12" height="12" viewBox="0 0 12 12"><path d="M6 0v12M0 6h12" stroke="#444" stroke-width="1.600"/></svg>
    <svg class="cwin" width="104" height="12" viewBox="0 0 104 12"><path d="M.5 6.500h9M46.500 3.500h7v7h-7zM48.500 3.500v-2h7v7h-2M93 1.500l9.500 9.500M102.500 1.500 93 11" fill="none" stroke="#111" stroke-width="1.100"/></svg>
  </header>
  <div class="cbar">
    <svg width="82" height="16" viewBox="0 0 82 16"><g fill="none" stroke-width="1.900"><path d="M15 8H2M8 1.500 1.500 8 8 14.500" stroke="#55585c"/><path d="M33 8h13M40 1.500 46.500 8 40 14.500" stroke="#b4b6b9"/><path d="M77 4.500a6 6 0 1 0 1.200 5.500M78.500 1v5h-5" stroke="#55585c"/></g></svg>
    <div class="omni"><svg width="10" height="12" viewBox="0 0 10 12"><path d="M.5 4.500h9V12h-9z" fill="#5f6368"/><path d="M2.500 5V3a2.500 2.500 0 0 1 5 0v2" fill="none" stroke="#5f6368" stroke-width="1.300"/></svg><span>roamresearch.com<em>/#/app/CI_Veeva/page/TDpjvDedY</em></span>
      <svg class="oi" width="112" height="16" viewBox="0 0 112 16"><g fill="none" stroke="#5f6368" stroke-width="1.400"><circle cx="8" cy="8" r="6"/><path d="M8 5v6M5 8h6"/><path d="M41 4.500h6v9h-6" stroke-width="1.100"/><circle cx="71" cy="6.500" r="4.800"/><path d="M74.500 10.500 79 15M71 4.500v4M69 6.500h4"/><path d="M104 1.500l1.900 4.400 4.700.4-3.600 3.100 1.100 4.600-4.100-2.500-4.100 2.500 1.100-4.600-3.600-3.100 4.700-.4z"/></g><path d="M33 1h7l3 12H33z" fill="#5f6368"/><circle cx="37" cy="6" r="2" fill="none" stroke="#fff"/></svg></div>
    <svg class="ext" width="16" height="16" viewBox="0 0 16 16"><path d="M5 3a2 2 0 0 1 4 0h4v4a2 2 0 0 1 0 4v4H9.500a2 2 0 0 0-4 0H1v-4.500a2 2 0 0 0 0-4V3z" fill="#5f6368"/></svg>
    <span class="me">M</span>
    <svg class="dots" width="4" height="16" viewBox="0 0 4 16"><g fill="#5f6368"><circle cx="2" cy="2.500" r="1.600"/><circle cx="2" cy="8" r="1.600"/><circle cx="2" cy="13.500" r="1.600"/></g></svg>
  </div>
  <div class="roam">
    <aside class="side">
      <div class="db">CI_Veeva<svg width="10" height="6" viewBox="0 0 10 6"><path d="M.5.5 5 5 9.500.5" fill="none" stroke="#5c7080" stroke-width="1.200"/></svg></div>
      <div class="nav"><svg viewBox="0 0 18 18"><path d="M1 3.500h16V17H1zM1 7.500h16M6.500 7v10M11.500 7v10M1 12h16M4.500 0v4M13.500 0v4" fill="none" stroke="currentColor" stroke-width="1.600"/></svg>DAILY NOTES</div>
      <div class="nav wide"><svg><use href="#i-graph"/></svg>GRAPH OVERVIEW</div>
      <div class="nav"><svg viewBox="0 0 18 18"><path d="M0 1.500h18M0 6.500h18M0 11.500h18M0 16.500h18" stroke="currentColor" stroke-width="2.400"/></svg>ALL PAGES</div>
      <div class="nav cut"><svg viewBox="0 0 14 14"><path d="M7 1l1.600 4.300h4.400L9.500 8l1.400 4.500L7 9.800l-3.900 2.700L4.500 8 1 5.300h4.400z" fill="currentColor"/></svg>SHORTCUTS</div>
      <div class="logo"><svg width="33" height="33"><use href="#i-roam"/></svg><b>Roam</b><span>RESEARCH</span></div>
    </aside>
    <main class="page">
      <div class="top"><i class="sync"></i><span class="find"><svg width="18" height="18" viewBox="0 0 18 18"><circle cx="8" cy="7.500" r="6.300" fill="none" stroke="#5c7080" stroke-width="2.300"/><path d="M12.500 12l4.500 5" stroke="#5c7080" stroke-width="2.700"/></svg>Find or Create Page</span>
        <svg width="14" height="14" viewBox="0 0 14 14"><path d="M.5 0h13v2L9 6.500v5L5.500 14V6.500L.5 2z" fill="#5c7080"/></svg><svg class="tg" width="18" height="18"><use href="#i-graph"/></svg><svg class="ts" width="18" height="18" viewBox="0 0 18 18"><path d="M9 1.500l2.200 5.300 5.600.4-4.300 3.700 1.400 5.600L9 13.400l-4.900 3.100 1.400-5.600L1.200 7.200l5.600-.4z" fill="none" stroke="#5c7080" stroke-width="1.600"/></svg><svg class="td" width="18" height="6" viewBox="0 0 18 6"><g fill="#5c7080"><circle cx="2.500" cy="3" r="2.200"/><circle cx="9" cy="3" r="2.200"/><circle cx="15.500" cy="3" r="2.200"/></g></svg></div>
      <h1>Klausur Business Intelligence</h1>
      <ul class="tree">
        <li><p><b>Metadaten:</b></p>
          <ul>
            <li><p><b>Notizen</b>:</p></li>
            <li><p><b>Tags:</b> <span class="tag">#CI/CD record-based Configurations Projektseite</span></p></li>
            <li><p><b>Uhrzeit/Datum:</b></p>
              <ul>
                <li><p><span class="br">[[</span><a>September 30th, 2020</a><span class="br">]]</span></p></li>
                <li><p><b>Von:</b> 15:55</p></li>
                <li><p><b>Bis:</b></p>
                  <ul><li><p><b>Geplant:</b> 18:00</p></li><li><p><b>Tatsächlich:</b></p></li></ul></li>
              </ul></li>
            <li><p><b>Personen:</b>&nbsp; <span class="br">[[</span><a>Moritz</a><span class="br">]]</span></p></li>
            <li><p><b>Unterstützung:</b></p></li>
          </ul></li>
        <li><p><b>Fragen/Notizen:</b></p></li>
        <li><p>&nbsp;</p></li>
      </ul>
      <div class="unl">Unlinked References</div>
      <i class="help">?</i>
    </main>
  </div>
  <footer class="taskbar">
    <span class="tk"><svg width="17" height="17"><use href="#i-start"/></svg></span><span class="tk lens"><svg width="17" height="17"><use href="#i-search"/></svg></span><span class="tk"><svg width="17" height="17"><use href="#i-cortana"/></svg></span><span class="tk tv"><svg width="17" height="17"><use href="#i-task"/></svg></span>
    <span class="tk app"><svg><use href="#i-explorer"/></svg></span><span class="tk app"><svg><use href="#i-store"/></svg></span><span class="tk app"><svg><use href="#i-ie"/></svg></span><span class="tk app run"><svg><use href="#i-vs"/></svg></span><span class="tk app cur"><svg><use href="#i-chrome"/></svg></span><span class="tk app run multi dot"><svg><use href="#i-teams"/></svg></span><span class="tk app run multi"><svg><use href="#i-word"/></svg></span><span class="tk app run"><svg><use href="#i-ppt"/></svg></span><span class="tk app run multi"><svg><use href="#i-obs"/></svg></span><span class="tk app run"><svg><use href="#i-green"/></svg></span><span class="tk app run"><svg><use href="#i-red"/></svg></span><span class="tk app run"><svg><use href="#i-edge"/></svg></span>
    <span class="clock last">16:27<br>30.09.2020</span>
  </footer>
</section>
</div>
</body>
</html>
```
FILE: styles.css
```css
* { box-sizing: border-box; }
body, p, ul, h1 { margin: 0; padding: 0; }
ul { list-style: none; }
i, em { font-style: normal; }
svg { display: block; flex: none; }
.defs { position: absolute; }
body { background: #000; font-family: "Open Sans", "Noto Sans", sans-serif; }
.desktop { display: flex; width: 3840px; height: 1080px; overflow: hidden; white-space: nowrap; }
.monitor { width: 1920px; height: 1080px; display: flex; flex-direction: column; flex: none; }

/* ---- Teams window ---- */
.t-title { height: 38px; background: #2d2d2d; display: flex; align-items: center; padding-left: 822px; color: #8c8c8c; font-size: 13.5px; letter-spacing: -.12px; flex: none; }
.t-win { display: flex; align-items: center; margin-left: auto; padding: 0 15px 2px 0; gap: 27px; }
.t-bar { margin-top: 1px; height: 60px; background: #1f1f1f; display: flex; align-items: center; padding-left: 28px; flex: none; }
.timer { color: #d6d6d6; width: 1148px; font-size: 13px; letter-spacing: .1px; }
.request { width: 175px; height: 32px; border-radius: 2px; background: #3b3a39; color: #6a6866; font-size: 14px; line-height: 32px; text-align: center; letter-spacing: -.2px; margin-right: 29px; }
.vbar { width: 1px; height: 32px; background: #5c5c5c; }
.t-tools { display: flex; padding-left: 11px; width: 216px; }
.tool { width: 48.5px; height: 36px; display: flex; align-items: center; justify-content: center; padding-bottom: 1px; }
.tool.active { background: linear-gradient(#a6a7dc, #a6a7dc) center bottom / 32px 2px no-repeat; }
.t-tools.media { padding-left: 12px; width: 169px; }
.leave { width: 132px; height: 32px; border-radius: 2px; background: #c4314b; color: #fff; font-weight: 600; font-size: 13.5px; letter-spacing: -.3px; display: flex; align-items: center; padding-left: 21px; gap: 10px; }
.t-body { display: flex; height: 939px; flex: none; }
.stage { width: 1601px; background: #000; }
.ppt { width: 1563px; height: 845px; margin-left: 19px; display: flex; flex-direction: column; color: #3c3c3c; font-size: 9.5px; letter-spacing: -.22px; background: #e6e6e8; }
.p-title { height: 25px; background: #c5512b; display: flex; align-items: center; padding-left: 16px; color: #f2c8b8; }
.p-name { margin-left: 554px; letter-spacing: -.23px; }
.p-win { margin-left: auto; margin-right: 14px; }
.p-tabs { height: 20px; background: #c5512b; color: #fff; display: flex; line-height: 20px; }
.p-tabs > span { padding: 0 9.3px; }
.p-tabs .on { background: #f1f1f1; color: #c5512b; }
.p-tabs > span:nth-child(2) { margin-left: 2px; }
.p-tabs > svg { margin: 3px 0 0 8px; }
.p-tabs .ask { padding: 0 0 0 5px; letter-spacing: -.12px; }
.p-tabs .user { margin-left: auto; padding: 0 6px 0 0; }
.p-tabs .share { background: #973d1f; padding: 0 4px; margin-right: 10px; display: flex; align-items: center; gap: 3px; height: 19px; }
.ribbon { height: 73px; background: #f1f1f1; border-bottom: 1px solid #cfcfcf; display: flex; }
.grp { border-right: 1px solid #dcdcdc; display: flex; flex-direction: column; margin: 2px 0; }
.g1 { width: 148px; } .g2 { width: 117px; } .g3 { width: 171px; } .g4 { width: 260px; } .g5 { width: 309px; } .g6 { width: 77px; }
.gb { display: flex; height: 56px; }
.gb.col { flex-direction: column; }
.gl { font-size: 8.5px; letter-spacing: -.18px; text-align: center; line-height: 16px; color: #666; position: relative; padding-right: 14px; }
.g3 .gl { padding-right: 11px; }
.g5 .gl { padding-right: 11px; } .g2 .gl, .g6 .gl { padding: 0; }
.la { position: absolute; right: 3px; top: 6px; width: 5px; height: 5px; border-left: 1px solid #999; border-top: 1px solid #999; background: linear-gradient(135deg, transparent 60%, #999 60%); }
.off { color: #a09e9e; }
.off .la { opacity: .5; }
.big { display: flex; flex-direction: column; align-items: center; text-align: center; width: 42px; line-height: 13px; padding-top: 2px; }
.big span { margin-top: 2px; }
.g1 .big span, .anord span { height: 15px; }
.g2 .big { width: 38px; }
.g2 .big span { margin-top: 3px; }
.anord { width: 48px; color: #555; margin-left: 1px; }
.anord svg { margin-top: 1px; margin-bottom: 1px; }
.schnell { width: 66px; }
.schnell span { margin-top: 4px; }
.dd { display: inline-block; width: 0; height: 0; border: 2px solid transparent; border-top: 2.5px solid currentColor; border-bottom: 0; margin-left: 4px; vertical-align: middle; flex: none; }
.big > .dd { margin: 0; }
.rows { display: flex; flex-direction: column; padding-left: 2px; }
.rows > span { display: flex; align-items: center; height: 18.4px; gap: 3px; }
.rows > span svg { width: 12px; height: 12px; }
.rows .dd { margin-left: 0; }
.g1 .rows .dd { margin-left: 3px; }
.g2 .rows { padding-left: 0; }
.g5 .rows { padding-left: 3px; } .g6 .rows { padding-left: 4px; }
.r1 { display: flex; height: 18px; margin: 7px 0 0 2px; align-items: center; }
.combo { width: 36px; height: 18px; border: 1px solid #d4d4d4; display: flex; align-items: center; justify-content: flex-end; padding-right: 2px; background: linear-gradient(#ececec, #ececec) right / 8px 100% no-repeat, #fff; }
.combo.wide { width: 73px; }
.ca { font-size: 11px; margin-left: 6px; width: 12px; }
.ca.sm { font-size: 9.5px; }
.ca sup { font-size: 5px; } .ca b { font-size: 5px; }
.sp { width: 1px; height: 14px; background: #d8d8d8; margin: 0 2px; }
.r2 { display: flex; align-items: center; height: 20px; margin: 6px 0 0 0; font-size: 10px; }
.r2 > * { text-align: center; }
.r2 > b { width: 17.3px; } .r2 > s { width: 18px; font-size: 8px; font-weight: bold; } .kern { width: 17px; text-decoration: underline; } .r2 > .dd { margin: 0 6px 0 2px; } .r2 .fa { width: 18px; font-size: 11px; font-weight: 600; }
.tA { font: bold 7px "Open Sans", sans-serif; fill: #2b6cb8; }
.ab, .ac { font: bold 5px "Open Sans", sans-serif; letter-spacing: 0; fill: #7b4fa0; } .ac { fill: #2b6cb8; }
.shapes { margin: 3px 1px 0 3px; }
.collapse { margin: 63px 6px 0 auto; }
.p-work { display: flex; height: 711px; }
.thumbs { width: 246px; padding: 13px 0 0 8px; border-right: 1px solid #cdcdd0; position: relative; }
.th { display: flex; height: 133px; font-size: 12px; color: #777; }
.th > b { font-weight: 400; width: 12px; padding-left: 2px; line-height: 14px; }
.th.sel > b { color: #d9623b; }
.mini { width: 207px; height: 118px; background: #fff; border: 1px solid #d5d5d7; }
.th.sel .mini { border: 2px solid #d9623b; width: 209px; height: 121px; margin-top: 0; }
.copy { font-family: Lato, "Open Sans", sans-serif; font-size: 19px; line-height: 1.317em; letter-spacing: .0105em; color: #1c1c1c; padding: 3.47em 0 0 2.8em; }
.copy .li { padding-left: 1.33em; position: relative; }
.copy .li::before { content: "•"; position: absolute; left: .1em; }
.copy .l15 { letter-spacing: -.006em; }
.copy .n { letter-spacing: -.0115em; }
.copy .warn { letter-spacing: -.0125em; }
.copy strong { color: #fb2310; letter-spacing: .0105em; }
.copy u { text-decoration: underline wavy #e66 1px; text-underline-offset: 2px; }
.mini .copy { font-size: 3.48px; font-weight: 500; }
.mini.just { font: 3.2px/4.57px Lato, "Open Sans", sans-serif; letter-spacing: 0; color: #333; padding: 12.5px 23px 0 11px; }
.just p { text-align-last: justify; white-space: normal; height: 4.57px; }
.just p.end { text-align-last: left; white-space: nowrap; }
.badge { position: absolute; left: 13px; top: 683px; height: 24px; width: 89px; border-radius: 3px; background: #6f6f6f; color: #fff; font-size: 12px; line-height: 25px; letter-spacing: -.35px; text-align: center; }
.p-right { width: 1317px; display: flex; flex-direction: column; }
.canvas { display: flex; height: 671px; border-bottom: 2px solid #d0d0d3; }
.vruler { margin: 32px 0 0 4px; width: 11px; height: 625px; background: #fff; display: flex; flex-direction: column; flex: none; font-size: 7.5px; letter-spacing: 0; color: #666; justify-content: center; overflow: hidden; }
.vruler span { height: 32.8px; flex: none; writing-mode: vertical-rl; transform: rotate(180deg); text-align: center; line-height: 11px; background: linear-gradient(#888, #888) center 0 / 4px 1px no-repeat, radial-gradient(#999 .7px, transparent 1px) center 8px / 2px 2px no-repeat, radial-gradient(#999 .7px, transparent 1px) center 24px / 2px 2px no-repeat; }
.mid { margin-left: 91px; width: 1114px; }
.hruler { margin-top: 3px; height: 11px; background: #fff; display: flex; justify-content: center; overflow: hidden; font-size: 8.5px; letter-spacing: -.2px; line-height: 11px; color: #555; }
.hruler span { width: 32.8px; flex: none; text-align: center; background: linear-gradient(#888, #888) 0 center / 1px 4px no-repeat, radial-gradient(#999 .7px, transparent 1px) 8px center / 2px 2px no-repeat, radial-gradient(#999 .7px, transparent 1px) 24px center / 2px 2px no-repeat; }
.slide { margin-top: 17px; height: 626px; background: #fff; border: 1px solid #d2d2d4; position: relative; }
.slide .grid { position: absolute; left: 0; top: 0; }
.slide .copy { position: relative; }
.vscroll { margin-left: auto; width: 12px; display: flex; flex-direction: column; }
.up { height: 13px; margin-top: 1px; background: #fff; border: 1px solid #ccc; display: flex; align-items: center; justify-content: center; }
.up::before { content: ""; border: 3px solid transparent; border-bottom: 4px solid #555; border-top: 0; }
.knob { height: 199px; background: #fff; border: 1px solid #ccc; }
.track { height: 411px; background: #dadada; border-bottom: 10px solid #fafafa; }
.notes { padding: 2px 0 0 9px; font-size: 11px; letter-spacing: .13px; line-height: 22px; color: #5c5c5c; }
.p-status { height: 16px; background: #f1f1f1; display: flex; align-items: center; padding-left: 4px; font-size: 8.5px; color: #6c6c6c; gap: 12px; }
.p-status span { display: flex; align-items: center; gap: 4px; }
.st-n { margin-left: 1074px; } .p-status .st-k { margin-left: 3px; letter-spacing: -.3px; gap: 3px; }
.st-view { width: 26px; height: 16px; background: #cfcfcf; display: flex; align-items: center; justify-content: center; margin-left: 1px; }
.p-status > .st-z { margin-left: auto; margin-right: 4px; } .st-z text { font-size: 8.5px; fill: #777; }

/* avatars */
.av { display: flex; align-items: center; justify-content: center; border-radius: 50%; font-weight: 600; position: relative; letter-spacing: -.3px; flex: none; }
.more { background: #6264a7; color: #fff; }
.yb { background: #d9f0f1; color: #41807c; } .pk { background: #f5d3df; color: #7b2145; } .js { background: #cfd9de; color: #21424c; } .pu { background: #d6d3ea; color: #37306f; } .ye { background: #f9eacb; color: #8a6414; } .jo { background: #f3d5cb; color: #852d14; } .lh { background: #dde2d6; color: #405230; } .ar { background: #e1deee; color: #4a4278; }
.strip { height: 94px; display: flex; }
.minis { width: 521px; background: #1b1b1b; display: flex; padding-left: 17px; align-items: center; }
.minis .av, .tile .av { width: 44px; height: 44px; font-size: 15.5px; margin: 0 20px; }
.minis .more { width: 42px; height: 42px; margin: 0 21px; font-size: 13px; }
.tile { width: 180px; position: relative; display: flex; align-items: center; justify-content: center; color: #fff; font-size: 12px; letter-spacing: -.38px; }
.tile.a { background: #404040; } .tile.b { background: #373737; } .tile.c { background: #333; } .tile.d { background: #323232; } .tile.f { background: #3a3a3a; }
.tile span { position: absolute; left: 15px; top: 74px; line-height: 18px; }
.tile svg { position: absolute; left: 152px; top: 76px; width: 14px; height: 14px; }
.tile.near svg { left: 87px; } .tile.near2 svg { left: 142px; }
.talk { background: radial-gradient(circle at 50% 50%, #6466a0 0, #55567f 35px, #3b3a50 75px, #363546 110px); }
.talk .av { outline: 4px solid #9a9cf8; outline-offset: 5px; box-shadow: 0 0 0 5px #3b3b52; }

.panel { width: 319px; background: #2d2d2d; padding: 30px 0 0 22px; position: relative; overflow: hidden; color: #fff; }
.ph { display: flex; height: 41px; align-items: center; justify-content: space-between; padding-right: 29px; font-size: 15.5px; letter-spacing: -.2px; }
.ph svg { margin-top: -2px; }
.pi { display: flex; align-items: center; margin-top: 11px; }
.pi span { width: 237px; height: 32px; border-radius: 3px; background: #3b3a38; color: #bab8b5; font-size: 13px; letter-spacing: .12px; line-height: 31px; padding-left: 12px; margin-right: 17px; }
.sec { display: flex; height: 34px; align-items: center; margin: 25px 0 -6px; position: relative; font-size: 11px; line-height: 15px; letter-spacing: -.04px; }
.sec b { font-weight: 600; width: 136px; }
.sec > i { position: absolute; left: -13px; top: 16px; border: 4px solid transparent; border-top: 4px solid #4d4d4d; border-bottom: 0; }
.sec span { width: 126px; height: 24px; border: 1px solid #737373; border-radius: 2px; text-align: center; line-height: 22px; font-weight: 700; font-size: 11.5px; letter-spacing: -.3px; }
.sec.two { height: 38px; margin: 0; padding-top: 8px; }
.sec.two > i { top: 21px; }
.people li { display: flex; height: 50px; align-items: center; }
.people .av { width: 32px; height: 32px; font-size: 12.5px; margin-right: 8px; font-weight: 500; letter-spacing: 0; }
.people .av em { position: absolute; right: -2px; bottom: -2px; width: 14px; height: 14px; border-radius: 50%; background: #fff; border: 2px solid #222; }
.people .av em.busy { background: #c4314b; }
.dnd::before { content: ""; display: block; width: 4px; height: 1px; margin: 4.5px 3px; background: #fff; }
.people div { width: 205px; display: flex; flex-direction: column; }
.people b { font-weight: 500; font-size: 13px; letter-spacing: 0; line-height: 17px; }
.people small { font-size: 11.5px; letter-spacing: -.13px; line-height: 16px; color: #a5a3a1; }
.people svg { width: 16px; height: 16px; color: #c8c6c4; }
.people .speaking b { font-weight: 700; letter-spacing: -.08px; }
.speaking .av { outline: 1.5px solid #a6a7dc; outline-offset: 2px; }
.pscroll { position: absolute; left: 308px; top: 132px; width: 8px; height: 788px; border-radius: 4px; background: #605e5c; }

/* ---- Taskbar ---- */
.taskbar { margin-top: auto; height: 40px; display: flex; background: linear-gradient(90deg, #21383f 0, #21363f 30%, #213346 60%, #1b2a43 85%, #1a2540); flex: none; }
.tk { width: 48px; display: flex; align-items: center; justify-content: center; position: relative; }
.lens { color: #fff; }
.tv { width: 50px; }
.app { width: 49.05px; }
.app > svg { width: 25px; height: 25px; }
.run::after, .cur::after { content: ""; position: absolute; left: 5px; right: 4px; bottom: 0; height: 2px; background: #76b9ed; }
.multi::after { background: linear-gradient(90deg, #76b9ed 32px, #4f7f9f 32px); }
.cur { background: #4e6069; }
.cur::after { left: 0; right: 0; }
.dot::before { content: ""; position: absolute; right: 12px; bottom: 7px; width: 10px; height: 10px; border-radius: 50%; background: #c50f3c; border: 1px solid #f3c9d2; }
.searchbox { width: 344px; margin: 1px 0; background: #f2f2f2; display: flex; align-items: center; gap: 12px; padding-left: 11px; font-size: 14.5px; letter-spacing: -.2px; color: #3a3a3a; }
.tray { margin: 10px 0 0 580px; }
.clock { width: 60px; color: #fff; font-size: 11.5px; letter-spacing: -.38px; line-height: 17px; text-align: center; padding-top: 3px; margin-left: 3px; }
.note { margin: 12px 0 0 14px; }
.peek { width: 1px; background: #6b7488; margin: 0 4px 0 auto; }
.clock.last { margin-left: auto; margin-right: 7px; }

/* ---- Chrome ---- */
.chrome { background: #fff; }
.tabs { height: 34px; background: #dee1e6; display: flex; padding-left: 8px; align-items: stretch; flex: none; font-size: 11.5px; color: #45494d; }
.tab { width: 168.9px; display: flex; align-items: center; padding-left: 12px; background: linear-gradient(#86898d, #86898d) right 7px / 1px 20px no-repeat; flex: none; }
.tab.act { background: #fff; border-radius: 8px 8px 0 0; }
.tab svg { width: 16px; height: 16px; }
.roamfav { color: #222; --hole: #fff; }
.tab b { font-weight: 400; letter-spacing: -.3px; width: 105px; margin: 0 6px 0 8px; overflow: hidden; -webkit-mask: linear-gradient(90deg, #000 80%, transparent); mask: linear-gradient(90deg, #000 80%, transparent); }
.tab i { width: 9px; height: 9px; margin-left: 2px; background: linear-gradient(45deg, transparent 43%, #4a4d51 43%, #4a4d51 57%, transparent 57%), linear-gradient(-45deg, transparent 43%, #4a4d51 43%, #4a4d51 57%, transparent 57%); }
.t3n { font: bold 8px "Open Sans", sans-serif; fill: #fff; } .dud { font: bold 11px "Open Sans", sans-serif; fill: #fff; }
.plus { margin: 11px 0 0 16px; }
.cwin { margin: 8px 18px 0 auto; }
.cbar { height: 37px; display: flex; align-items: center; padding-left: 14px; border-bottom: 1px solid #d5d7da; flex: none; }
.omni { margin-left: 12px; width: 1704px; height: 28px; border-radius: 14px; background: #f1f3f4; display: flex; align-items: center; padding-left: 12px; font-size: 13.5px; letter-spacing: -.1px; color: #26282b; }
.omni span { margin-left: 12px; } .omni em { color: #6a6e73; }
.oi { margin-left: auto; margin-right: 10px; }
.ext { margin-left: 14px; }
.me { width: 22px; height: 22px; border-radius: 50%; background: #f4511e; color: #fff; font-size: 11px; line-height: 22px; text-align: center; margin-left: 13px; }
.dots { margin-left: 19px; }

/* ---- Roam ---- */
.roam { display: flex; height: 969px; font-family: Inter, "Open Sans", sans-serif; flex: none; }
.side { width: 255px; background: #182026; padding: 11px 0 0 22px; color: #5c7080; display: flex; flex-direction: column; }
.db { height: 30px; display: flex; align-items: center; color: #dfe4e8; font-weight: 600; font-size: 15px; letter-spacing: .24px; gap: 11px; margin-bottom: 9px; }
.nav { height: 41px; display: flex; align-items: center; font-weight: 600; font-size: 15px; letter-spacing: .03px; gap: 9px; }
.nav.wide { letter-spacing: .25px; }
.nav svg { width: 18px; height: 18px; }
.nav.cut { border-top: 1px solid #32444f; margin: 8px 22px 0 0; height: 60px; letter-spacing: .3px; gap: 10px; }
.nav.cut svg { width: 15px; height: 15px; }
.logo { margin-top: auto; padding: 0 0 13px 0; display: flex; align-items: center; color: #fff; --hole: #182026; }
.logo b { font: 27px "Liberation Serif", serif; letter-spacing: -.3px; margin-left: 9px; }
.logo span { font-size: 11px; letter-spacing: -.15px; margin: 6px 0 0 3px; }
.page { flex: 1; background: #fff; padding-left: 313px; position: relative; color: #202b33; }
.top { display: flex; align-items: center; justify-content: flex-end; padding: 8px 22px 0 0; height: 41px; }
.sync { width: 11px; height: 11px; border-radius: 50%; background: #56b98e; margin-right: 12px; }
.find { width: 220px; height: 33px; border: 1px solid #c8cbce; border-top-color: #a9adb0; border-radius: 17px; display: flex; align-items: center; padding-left: 6px; gap: 8px; font-size: 15.5px; letter-spacing: -.07px; color: #a3abb2; margin-right: 10px; }
.tg { margin-left: 15px; color: #5c7080; } .ts { margin-left: 13px; } .td { margin-left: 17px; }
h1 { font-size: 39.5px; font-weight: 400; letter-spacing: .17px; line-height: 50px; margin-top: 48px; }
.tree { margin-top: 36px; font-size: 15px; font-weight: 400; letter-spacing: .22px; }
.tree p { height: 30.75px; line-height: 31.5px; display: block; position: relative; padding-left: 18px; }
.tree p::before { content: ""; position: absolute; left: 0; top: 12px; width: 6px; height: 6px; border-radius: 50%; background: #3a4a56; }
.tree b { font-weight: 600; letter-spacing: .33px; }
.tree ul { margin-left: 2px; border-left: 1px solid #c4d0d9; padding-left: 26px; }
.tag, .br { color: #a7b6c2; } .tree a { color: #106ba3; }
.unl { margin-top: 63px; line-height: 16px; font-size: 15px; font-weight: 700; letter-spacing: .1px; color: #ced9e0; }
.help { position: absolute; right: 4px; bottom: 6px; width: 40px; height: 40px; border-radius: 50%; background: #2a3640; border: 2px solid #46545f; color: #e8ecef; font-size: 20px; line-height: 36px; text-align: center; }
```
